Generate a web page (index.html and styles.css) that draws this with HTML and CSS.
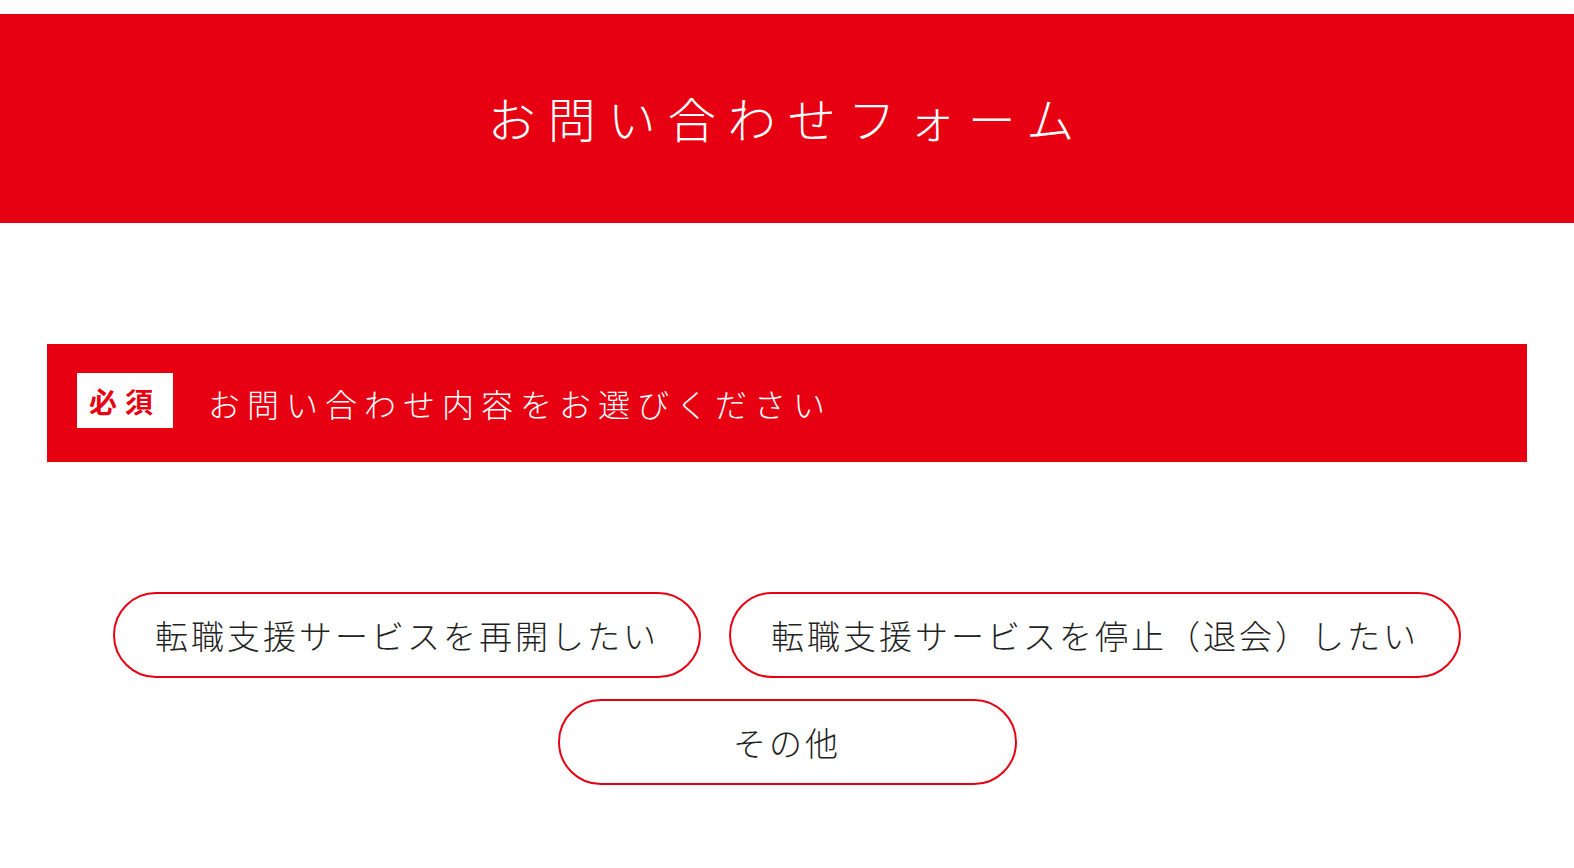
FILE: index.html
```html
<!DOCTYPE html>
<html lang="ja">
<head>
    <meta charset="UTF-8">
    <meta name="viewport" content="width=device-width, initial-scale=1.0">
    <title>お問い合わせフォーム</title>
    <link rel="stylesheet" href="styles.css">
</head>
<body>

<header class="page-head">
    <h1>お問い合わせフォーム</h1>
</header>

<main class="form">
    <div class="question">
        <span class="required">必須</span>
        <span class="question-text">お問い合わせ内容をお選びください</span>
    </div>

    <div class="choices">
        <button class="choice">転職支援サービスを再開したい</button>
        <button class="choice">転職支援サービスを停止（退会）したい</button>
        <button class="choice">その他</button>
    </div>
</main>

</body>
</html>
```

FILE: styles.css
```css
body {
    margin: 0;
    background: #fff;
    font-family: "Noto Sans CJK JP", "Noto Sans", sans-serif;
    color: #222;
}

.page-head {
    margin-top: 14px;
    height: 209px;
    background-color: #e60012;
    display: flex;
    justify-content: center;
    align-items: center;
}

.page-head h1 {
    margin: 0;
    color: #fff;
    font-size: 48px;
    font-weight: 300;
    letter-spacing: 12px;
    transform: translateY(-2px);
}

.form {
    width: 1480px;
    margin: 121px auto 0;
}

.question {
    height: 118px;
    background-color: #e60012;
    display: flex;
    align-items: center;
    padding-left: 30px;
}

.required {
    width: 96px;
    height: 55px;
    margin-bottom: 5px;
    background: #fff;
    color: #e60012;
    font-size: 28px;
    font-weight: 700;
    letter-spacing: 8px;
    display: flex;
    justify-content: center;
    align-items: center;
    box-sizing: border-box;
}

.question-text {
    margin-left: 35px;
    color: #fff;
    font-size: 32px;
    font-weight: 300;
    letter-spacing: 7px;
}

.choices {
    margin-top: 130px;
    display: flex;
    flex-wrap: wrap;
    justify-content: center;
    column-gap: 28px;
    row-gap: 21px;
}

.choice {
    min-width: 459px;
    height: 86px;
    padding: 0 40px;
    background: #fff;
    border: 2px solid #e60012;
    border-radius: 43px;
    font-family: inherit;
    font-size: 33px;
    font-weight: 300;
    letter-spacing: 3px;
    color: #222;
    cursor: pointer;
}

.choice:hover {
    background-color: #fff3f3;
}
```
